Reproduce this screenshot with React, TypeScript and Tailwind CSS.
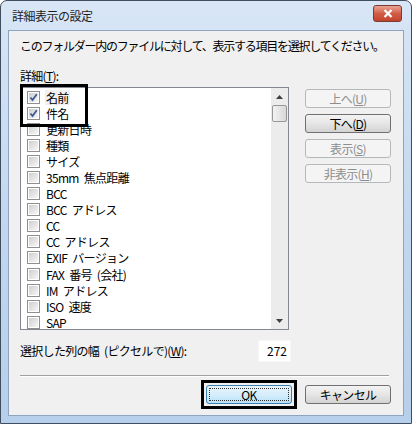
import { ReactNode } from 'react';

// 詳細表示の設定 dialog (Windows 7 look)
const items = [
  { label: '名前', checked: true },
  { label: '件名', checked: true },
  { label: '更新日時', checked: false },
  { label: '種類', checked: false },
  { label: 'サイズ', checked: false },
  { label: '35mm 焦点距離', checked: false },
  { label: 'BCC', checked: false },
  { label: 'BCC アドレス', checked: false },
  { label: 'CC', checked: false },
  { label: 'CC アドレス', checked: false },
  { label: 'EXIF バージョン', checked: false },
  { label: 'FAX 番号 (会社)', checked: false },
  { label: 'IM アドレス', checked: false },
  { label: 'ISO 速度', checked: false },
  { label: 'SAP', checked: false },
];

function CheckBox({ checked }: { checked: boolean }) {
  return (
    <div className="w-[13px] h-[13px] border border-[#8f8f8f] bg-white p-[1px] shrink-0">
      <div className="w-full h-full bg-gradient-to-br from-[#cfcfcf] to-[#f7f7f7] relative">
        {checked && (
          <svg viewBox="0 0 9 9" className="absolute inset-0 w-full h-full">
            <path d="M1.5 4.5 L3.5 7 L7.8 1.2" fill="none" stroke="#3b5998" strokeWidth="1.8" />
          </svg>
        )}
      </div>
    </div>
  );
}

function SideButton({ children, disabled }: { children: ReactNode; disabled?: boolean }) {
  return (
    <div
      className={`w-[86px] h-[19px] rounded-[3px] border flex items-center justify-center text-[12px] ${
        disabled
          ? 'border-[#b5b8ba] bg-[#f4f4f4] text-[#8d8d8d]'
          : 'border-[#707070] bg-gradient-to-b from-[#f3f3f3] via-[#e6e6e6] to-[#d3d3d3] text-black'
      }`}
    >
      {children}
    </div>
  );
}

export default function App() {
  return (
    <div
      className="w-[412px] h-[424px] overflow-hidden bg-white"
      style={{ fontFamily: '"Noto Sans CJK JP", "Noto Sans", sans-serif' }}
    >
      <div className="w-full h-full rounded-t-[7px] border border-[#404d5e] bg-gradient-to-b from-[#d8e6f6] via-[#c3d8ef] to-[#b6cfea] flex flex-col px-[7px] pb-[7px]">
        {/* title bar */}
        <div className="h-[29px] flex items-center justify-between shrink-0">
          <span className="pl-[4px] text-[12px] tracking-[-0.5px] text-[#1e1e1e]">詳細表示の設定</span>
          <div className="mr-[2px] mt-[-4px] w-[29px] h-[17px] rounded-[3px] border border-[#7d3a32] bg-gradient-to-b from-[#e8a493] via-[#d25e47] to-[#c2432c] flex items-center justify-center">
            <svg viewBox="0 0 10 9" className="w-[10px] h-[9px]">
              <path d="M1.5 1 L8.5 8 M8.5 1 L1.5 8" stroke="white" strokeWidth="2.2" />
            </svg>
          </div>
        </div>

        {/* client area */}
        <div className="flex-1 border border-[#8ea4c0] bg-[#f0f0f0] pl-[11px] pr-[12px] text-[12px] tracking-[-0.7px] [word-spacing:3px] text-black flex flex-col">
          <div className="mt-[7px] h-[16px] leading-[16px] whitespace-nowrap tracking-[-1.25px]">
            このフォルダー内のファイルに対して、表示する項目を選択してください。
          </div>
          <div className="mt-[14px] h-[16px] leading-[16px]">
            詳細(<span className="underline">T</span>):
          </div>

          <div className="mt-[3px] flex gap-[16px]">
            {/* list */}
            <div className="relative w-[271px] h-[243px] border border-[#828790] bg-white flex">
              <div className="flex-1 pt-[1px] pl-[6px]">
                {items.map((it, i) => (
                  <div key={i} className="h-[16.1px] flex items-center gap-[5px]">
                    <CheckBox checked={it.checked} />
                    <span className={`leading-[15px] px-[1px] ${i === 0 ? 'bg-[#f0f0f0]' : ''}`}>{it.label}</span>
                  </div>
                ))}
              </div>
              {/* scrollbar */}
              <div className="w-[17px] h-full bg-[#ececec] flex flex-col items-center">
                <div className="h-[17px] flex items-center justify-center">
                  <svg viewBox="0 0 7 4" className="w-[7px] h-[4px]">
                    <path d="M0 4 L3.5 0 L7 4 Z" fill="#3f3f3f" />
                  </svg>
                </div>
                <div className="w-[15px] h-[17px] rounded-[2px] border border-[#979797] bg-gradient-to-r from-[#f3f3f3] to-[#d8d8d8]" />
                <div className="flex-1" />
                <div className="h-[17px] flex items-center justify-center">
                  <svg viewBox="0 0 7 4" className="w-[7px] h-[4px]">
                    <path d="M0 0 L3.5 4 L7 0 Z" fill="#3f3f3f" />
                  </svg>
                </div>
              </div>
              {/* highlight frame */}
              <div className="absolute left-[-1px] top-[-4px] w-[68px] h-[43px] border-[3px] border-black" />
            </div>

            {/* side buttons */}
            <div className="flex flex-col gap-[6px] pt-[2px]">
              <SideButton disabled>
                上へ(<span className="underline">U</span>)
              </SideButton>
              <SideButton>
                下へ(<span className="underline">D</span>)
              </SideButton>
              <SideButton disabled>
                表示(<span className="underline">S</span>)
              </SideButton>
              <SideButton disabled>
                非表示(<span className="underline">H</span>)
              </SideButton>
            </div>
          </div>

          {/* width row */}
          <div className="mt-[10px] flex items-center w-[271px] justify-between">
            <span>
              選択した列の幅 (ピクセルで)(<span className="underline">W</span>):
            </span>
            <div className="w-[33px] h-[22px] bg-white border border-[#f6f6f6] flex items-center justify-end pr-[3px] tracking-normal">
              272
            </div>
          </div>

          <div className="mt-[13px] h-[1px] bg-[#a0a0a0] border-b border-white mr-[2px] box-content" />

          {/* OK / cancel */}
          <div className="mt-[3px] flex justify-end gap-[8px]">
            <div className="border-[3px] border-black p-[2px] ml-[-3px]">
              <div className="w-[86px] h-[19px] rounded-[3px] border border-[#3c7fb1] bg-gradient-to-b from-[#e9f5fc] via-[#d6eefb] to-[#b9e1f8] p-[2px]">
                <div className="w-full h-full border border-dotted border-[#333] flex items-center justify-center text-[12px] leading-none">
                  OK
                </div>
              </div>
            </div>
            <div className="pt-[5px]">
              <SideButton>キャンセル</SideButton>
            </div>
          </div>
        </div>
      </div>
    </div>
  );
}
